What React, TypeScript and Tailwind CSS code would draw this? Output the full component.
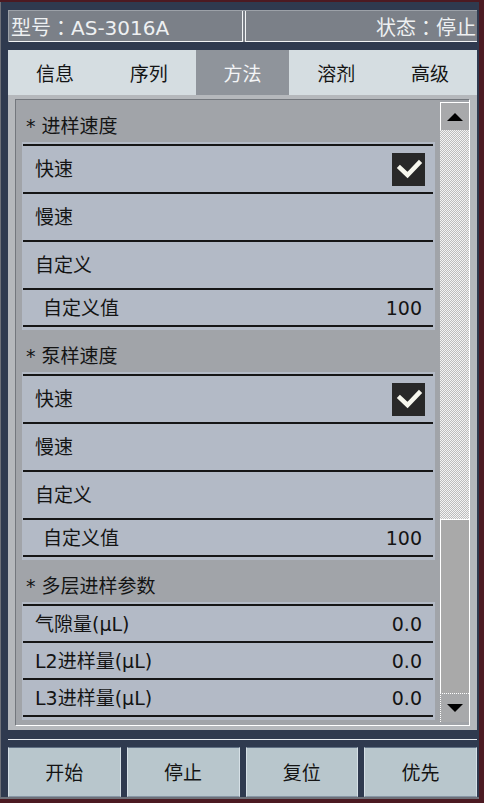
import React from "react";

type Row = { label: string; indent?: boolean; value?: string; checked?: boolean; short?: boolean };
type Section = { title: string; rows: Row[] };

const sections: Section[] = [
  {
    title: "进样速度",
    rows: [
      { label: "快速", checked: true },
      { label: "慢速" },
      { label: "自定义" },
      { label: "自定义值", indent: true, value: "100", short: true },
    ],
  },
  {
    title: "泵样速度",
    rows: [
      { label: "快速", checked: true },
      { label: "慢速" },
      { label: "自定义" },
      { label: "自定义值", indent: true, value: "100", short: true },
    ],
  },
  {
    title: "多层进样参数",
    rows: [
      { label: "气隙量(μL)", value: "0.0", short: true },
      { label: "L2进样量(μL)", value: "0.0", short: true },
      { label: "L3进样量(μL)", value: "0.0", short: true },
    ],
  },
];

function Check() {
  return (
    <div className="w-[33px] h-[33px] bg-[#282828] flex items-center justify-center">
      <svg width="33" height="33" viewBox="0 0 33 33">
        <polyline points="8,15 15.5,22 27,10" fill="none" stroke="#f7f7ee" strokeWidth="4.5" strokeLinecap="square" />
      </svg>
    </div>
  );
}

function SectionBlock({ s }: { s: Section }) {
  return (
    <div>
      <div className="h-[42px] flex items-end pb-[4px] pl-[10px] text-[19px] leading-[24px] text-[#141414] whitespace-pre">
        {"* " + s.title}
      </div>
      <div className="ml-[6px] mr-[5px] bg-[#b3bac6] pt-[2px] pb-[3px] pl-[1px] pr-[2px]">
        {s.rows.map((r, i) => {
          const last = i === s.rows.length - 1;
          return (
            <div
              key={i}
              className={
                (last
                  ? "h-[39px] border-t-2 border-b-2 border-[#161616] "
                  : r.short
                  ? "h-[37px] border-t-2 border-[#161616] "
                  : "h-[48px] border-t-2 border-[#161616] ") +
                "flex items-center justify-between pr-[8px] pt-[1px] text-[19px] text-[#141414] " +
                (r.indent ? "pl-[20px]" : "pl-[12px]")
              }
            >
              <span>{r.label}</span>
              {r.checked ? <Check /> : r.value ? <span className="pr-[3px]">{r.value}</span> : null}
            </div>
          );
        })}
      </div>
    </div>
  );
}

export default function App() {
  return (
    <div className="w-[484px] h-[803px] bg-[#4c1a22] pt-[2px] font-['DejaVu_Sans','Noto_Sans_CJK_SC',sans-serif]">
      <div className="w-[479px] h-[797px] bg-[#2f3a4f] border-l border-b-2 border-[#6d7078] pl-[7px] pt-[8px]">
        {/* header */}
        <div className="w-[469px] h-[32px] flex bg-[#7b8088] border-t border-l border-[#9ca1a8] text-[20px] text-[#eef0f2]">
          <div className="w-[234px] h-full border-r border-b border-[#f2f4f6] flex items-center pl-[2px] pt-[3px]">
            型号<span className="font-['Noto_Sans_CJK_TC',sans-serif]">：</span>AS-3016A
          </div>
          <div className="flex-1 ml-[2px] h-full border-l border-b border-[#f2f4f6] flex items-center justify-end pr-[1px] pt-[3px]">
            状态<span className="font-['Noto_Sans_CJK_TC',sans-serif]">：</span>停止
          </div>
        </div>
        {/* tabs */}
        <div className="w-[469px] h-[45px] mt-[8px] grid grid-cols-5 bg-[#d5dde1] text-[19px] text-[#141414]">
          <div className="flex items-center justify-center pt-[4px]">信息</div>
          <div className="flex items-center justify-center pt-[4px]">序列</div>
          <div className="flex items-center justify-center pt-[4px] bg-[#8f949b] text-[#f3f4f6]">方法</div>
          <div className="flex items-center justify-center pt-[4px]">溶剂</div>
          <div className="flex items-center justify-center pt-[4px]">高级</div>
        </div>
        {/* panel */}
        <div className="w-[469px] h-[635px] bg-[#b5b8bc] pt-[4px] pl-[7px]">
          <div className="w-[455px] h-[627px] border border-t-[#73777d] border-l-[#73777d] border-r-white border-b-white bg-[#a1a4a9] flex">
            <div className="w-[424px] h-full overflow-hidden">
              {sections.map((s, i) => (
                <SectionBlock key={i} s={s} />
              ))}
            </div>
            <div className="w-[29px] h-full pt-[2px] pb-[3px] flex flex-col">
              <div className="h-[28px] bg-[#a8a9ab] border-t border-l border-white flex items-center justify-center">
                <svg width="16" height="8" viewBox="0 0 16 8">
                  <polygon points="0,8 16,8 8,0" fill="#000" />
                </svg>
              </div>
              <div className="h-[389px] bg-[image:repeating-conic-gradient(#bdbdbd_0_25%,#f4f4f4_0_50%)] bg-[length:2px_2px]" />
              <div className="h-[174px] bg-[#a9a9a9] border-t border-l border-white" />
              <div className="h-[29px] bg-[#a8a9ab] border-t border-dotted border-l border-white flex items-center justify-center">
                <svg width="16" height="8" viewBox="0 0 16 8">
                  <polygon points="0,0 16,0 8,8" fill="#000" />
                </svg>
              </div>
            </div>
          </div>
        </div>
        {/* separator */}
        <div className="w-[469px] h-[1px] mt-[9px] bg-[#e8edf1]" />
        {/* buttons */}
        <div className="w-[469px] h-[50px] mt-[7px] grid grid-cols-4 gap-[6px] text-[19px] text-[#141414]">
          {["开始", "停止", "复位", "优先"].map((b) => (
            <div
              key={b}
              className="bg-[#b8c6cc] border border-t-[#5f6f83] border-l-[#d6e0e6] border-r-[#d6e0e6] border-b-[#8796a5] flex items-center justify-center pt-[3px]"
            >
              {b}
            </div>
          ))}
        </div>
      </div>
    </div>
  );
}
